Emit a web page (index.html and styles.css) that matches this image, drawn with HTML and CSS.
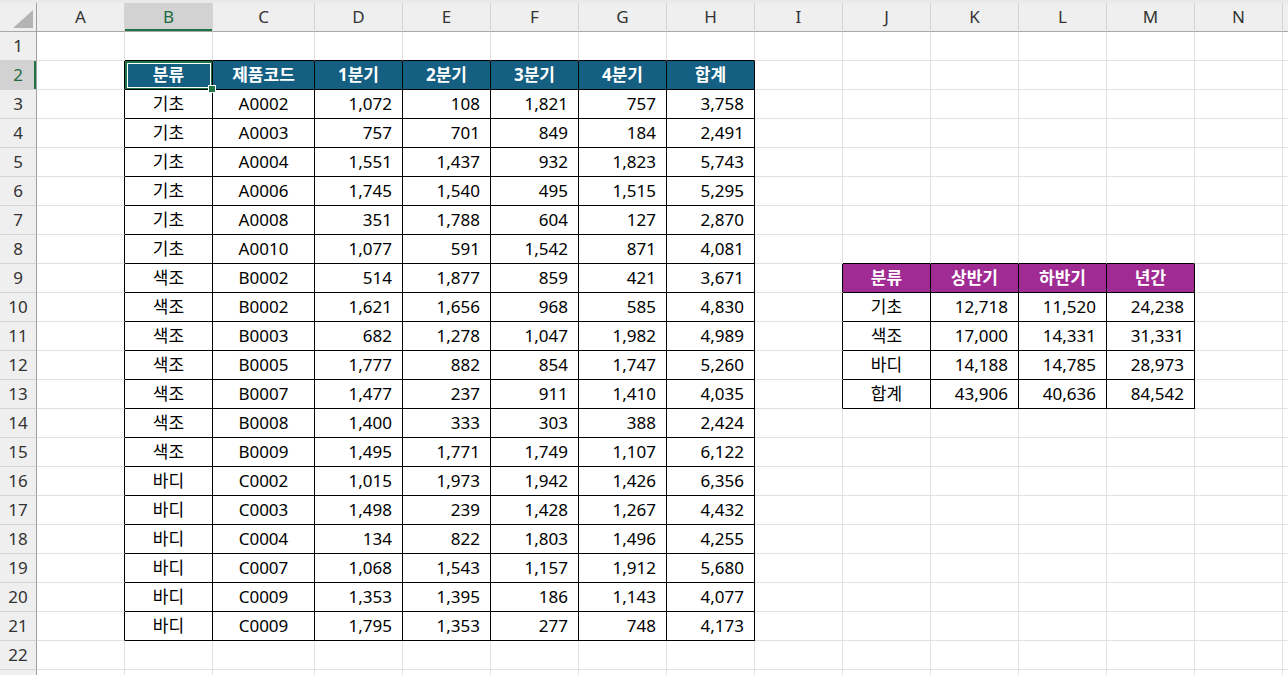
FILE: index.html
```html
<!DOCTYPE html>
<html lang="ko">
<head>
<meta charset="utf-8">
<title>Sheet</title>
<link rel="stylesheet" href="styles.css">
</head>
<body>
<div class="topstrip"></div>
<table class="sheet">
<colgroup>
<col class="w-rh"><col class="w88"><col class="w88"><col class="w102"><col class="w88"><col class="w88"><col class="w88"><col class="w88"><col class="w88"><col class="w88"><col class="w88"><col class="w88"><col class="w88"><col class="w88"><col class="w88"><col class="w88">
</colgroup>
<tr class="colhead">
<th class="corner"><span class="tri"></span></th><th class="ch">A</th><th class="ch selc">B</th><th class="ch">C</th><th class="ch">D</th><th class="ch">E</th><th class="ch">F</th><th class="ch">G</th><th class="ch">H</th><th class="ch">I</th><th class="ch">J</th><th class="ch">K</th><th class="ch">L</th><th class="ch">M</th><th class="ch">N</th><th class="ch"></th>
</tr>
<tr><th class="rh">1</th><td></td><td class="kb"></td><td class="kb"></td><td class="kb"></td><td class="kb"></td><td class="kb"></td><td class="kb"></td><td class="kb"></td><td></td><td></td><td></td><td></td><td></td><td></td><td></td></tr>
<tr><th class="rh selr">2</th><td class="kr"></td><td class="k hb sel">분류<span class="handle"></span></td><td class="k hb">제품코드</td><td class="k hb">1분기</td><td class="k hb">2분기</td><td class="k hb">3분기</td><td class="k hb">4분기</td><td class="k hb">합계</td><td></td><td></td><td></td><td></td><td></td><td></td><td></td></tr>
<tr><th class="rh">3</th><td class="kr"></td><td class="k">기초</td><td class="k">A0002</td><td class="k n">1,072</td><td class="k n">108</td><td class="k n">1,821</td><td class="k n">757</td><td class="k n">3,758</td><td></td><td></td><td></td><td></td><td></td><td></td><td></td></tr>
<tr><th class="rh">4</th><td class="kr"></td><td class="k">기초</td><td class="k">A0003</td><td class="k n">757</td><td class="k n">701</td><td class="k n">849</td><td class="k n">184</td><td class="k n">2,491</td><td></td><td></td><td></td><td></td><td></td><td></td><td></td></tr>
<tr><th class="rh">5</th><td class="kr"></td><td class="k">기초</td><td class="k">A0004</td><td class="k n">1,551</td><td class="k n">1,437</td><td class="k n">932</td><td class="k n">1,823</td><td class="k n">5,743</td><td></td><td></td><td></td><td></td><td></td><td></td><td></td></tr>
<tr><th class="rh">6</th><td class="kr"></td><td class="k">기초</td><td class="k">A0006</td><td class="k n">1,745</td><td class="k n">1,540</td><td class="k n">495</td><td class="k n">1,515</td><td class="k n">5,295</td><td></td><td></td><td></td><td></td><td></td><td></td><td></td></tr>
<tr><th class="rh">7</th><td class="kr"></td><td class="k">기초</td><td class="k">A0008</td><td class="k n">351</td><td class="k n">1,788</td><td class="k n">604</td><td class="k n">127</td><td class="k n">2,870</td><td></td><td></td><td></td><td></td><td></td><td></td><td></td></tr>
<tr><th class="rh">8</th><td class="kr"></td><td class="k">기초</td><td class="k">A0010</td><td class="k n">1,077</td><td class="k n">591</td><td class="k n">1,542</td><td class="k n">871</td><td class="k n">4,081</td><td></td><td class="kb"></td><td class="kb"></td><td class="kb"></td><td class="kb"></td><td></td><td></td></tr>
<tr><th class="rh">9</th><td class="kr"></td><td class="k">색조</td><td class="k">B0002</td><td class="k n">514</td><td class="k n">1,877</td><td class="k n">859</td><td class="k n">421</td><td class="k n">3,671</td><td class="kr"></td><td class="k hp">분류</td><td class="k hp">상반기</td><td class="k hp">하반기</td><td class="k hp">년간</td><td></td><td></td></tr>
<tr><th class="rh">10</th><td class="kr"></td><td class="k">색조</td><td class="k">B0002</td><td class="k n">1,621</td><td class="k n">1,656</td><td class="k n">968</td><td class="k n">585</td><td class="k n">4,830</td><td class="kr"></td><td class="k">기초</td><td class="k n">12,718</td><td class="k n">11,520</td><td class="k n">24,238</td><td></td><td></td></tr>
<tr><th class="rh">11</th><td class="kr"></td><td class="k">색조</td><td class="k">B0003</td><td class="k n">682</td><td class="k n">1,278</td><td class="k n">1,047</td><td class="k n">1,982</td><td class="k n">4,989</td><td class="kr"></td><td class="k">색조</td><td class="k n">17,000</td><td class="k n">14,331</td><td class="k n">31,331</td><td></td><td></td></tr>
<tr><th class="rh">12</th><td class="kr"></td><td class="k">색조</td><td class="k">B0005</td><td class="k n">1,777</td><td class="k n">882</td><td class="k n">854</td><td class="k n">1,747</td><td class="k n">5,260</td><td class="kr"></td><td class="k">바디</td><td class="k n">14,188</td><td class="k n">14,785</td><td class="k n">28,973</td><td></td><td></td></tr>
<tr><th class="rh">13</th><td class="kr"></td><td class="k">색조</td><td class="k">B0007</td><td class="k n">1,477</td><td class="k n">237</td><td class="k n">911</td><td class="k n">1,410</td><td class="k n">4,035</td><td class="kr"></td><td class="k">합계</td><td class="k n">43,906</td><td class="k n">40,636</td><td class="k n">84,542</td><td></td><td></td></tr>
<tr><th class="rh">14</th><td class="kr"></td><td class="k">색조</td><td class="k">B0008</td><td class="k n">1,400</td><td class="k n">333</td><td class="k n">303</td><td class="k n">388</td><td class="k n">2,424</td><td></td><td></td><td></td><td></td><td></td><td></td><td></td></tr>
<tr><th class="rh">15</th><td class="kr"></td><td class="k">색조</td><td class="k">B0009</td><td class="k n">1,495</td><td class="k n">1,771</td><td class="k n">1,749</td><td class="k n">1,107</td><td class="k n">6,122</td><td></td><td></td><td></td><td></td><td></td><td></td><td></td></tr>
<tr><th class="rh">16</th><td class="kr"></td><td class="k">바디</td><td class="k">C0002</td><td class="k n">1,015</td><td class="k n">1,973</td><td class="k n">1,942</td><td class="k n">1,426</td><td class="k n">6,356</td><td></td><td></td><td></td><td></td><td></td><td></td><td></td></tr>
<tr><th class="rh">17</th><td class="kr"></td><td class="k">바디</td><td class="k">C0003</td><td class="k n">1,498</td><td class="k n">239</td><td class="k n">1,428</td><td class="k n">1,267</td><td class="k n">4,432</td><td></td><td></td><td></td><td></td><td></td><td></td><td></td></tr>
<tr><th class="rh">18</th><td class="kr"></td><td class="k">바디</td><td class="k">C0004</td><td class="k n">134</td><td class="k n">822</td><td class="k n">1,803</td><td class="k n">1,496</td><td class="k n">4,255</td><td></td><td></td><td></td><td></td><td></td><td></td><td></td></tr>
<tr><th class="rh">19</th><td class="kr"></td><td class="k">바디</td><td class="k">C0007</td><td class="k n">1,068</td><td class="k n">1,543</td><td class="k n">1,157</td><td class="k n">1,912</td><td class="k n">5,680</td><td></td><td></td><td></td><td></td><td></td><td></td><td></td></tr>
<tr><th class="rh">20</th><td class="kr"></td><td class="k">바디</td><td class="k">C0009</td><td class="k n">1,353</td><td class="k n">1,395</td><td class="k n">186</td><td class="k n">1,143</td><td class="k n">4,077</td><td></td><td></td><td></td><td></td><td></td><td></td><td></td></tr>
<tr><th class="rh">21</th><td class="kr"></td><td class="k">바디</td><td class="k">C0009</td><td class="k n">1,795</td><td class="k n">1,353</td><td class="k n">277</td><td class="k n">748</td><td class="k n">4,173</td><td></td><td></td><td></td><td></td><td></td><td></td><td></td></tr>
<tr><th class="rh">22</th><td></td><td></td><td></td><td></td><td></td><td></td><td></td><td></td><td></td><td></td><td></td><td></td><td></td><td></td><td></td></tr>
<tr><th class="rh"></th><td></td><td></td><td></td><td></td><td></td><td></td><td></td><td></td><td></td><td></td><td></td><td></td><td></td><td></td><td></td></tr>
</table>
</body>
</html>
```
FILE: styles.css
```css
html, body {
  margin: 0;
  padding: 0;
  background: #ffffff;
  overflow: hidden;
}
body {
  width: 1288px;
  height: 675px;
  font-family: "Noto Sans", "Noto Sans CJK KR", sans-serif;
  font-size: 17px;
  color: #000;
}
.topstrip {
  height: 3px;
  background: #e7eae7;
}
.sheet {
  border-collapse: separate;
  border-spacing: 0;
  table-layout: fixed;
  width: 1371px;
}
.w-rh { width: 37px; }
.w88 { width: 88px; }
.w102 { width: 102px; }

.sheet tr { height: 29px; }

.sheet td, .sheet th {
  padding: 0;
  height: 29px;
  line-height: 28px;
  text-align: center;
  white-space: nowrap;
  overflow: hidden;
  font-weight: 400;
  border-right: 1px solid #e1e1e1;
  border-bottom: 1px solid #e1e1e1;
  box-sizing: border-box;
}

.corner {
  background: #efefef;
  position: relative;
  border-right: 1px solid #9e9e9e !important;
  border-bottom: 1px solid #a8a8a8 !important;
}
.tri {
  position: absolute;
  right: 3px;
  bottom: 3px;
  width: 0;
  height: 0;
  border-left: 20px solid transparent;
  border-bottom: 18px solid #b4b4b4;
}
.ch {
  background: #efefef;
  color: #333;
  border-right: 1px solid #d4d4d4 !important;
  border-bottom: 1px solid #a8a8a8 !important;
}
.ch.selc {
  background: #d2d2d2;
  color: #1d6b40;
  box-shadow: inset 0 -2px 0 #217346;
}
.rh {
  background: #efefef;
  color: #333;
  border-right: 1px solid #9e9e9e !important;
  border-bottom: 1px solid #d4d4d4 !important;
}
.rh.selr {
  background: #d2d2d2;
  color: #1d6b40;
  box-shadow: inset -2px 0 0 #217346;
}

.sheet td.k {
  border-right: 1px solid #000;
  border-bottom: 1px solid #000;
}
.sheet td.kr { border-right: 1px solid #000; }
.sheet td.kb { border-bottom: 1px solid #000; }

.sheet td.n {
  text-align: right;
  padding-right: 10px;
}
.sheet td.hb {
  background: #156082;
  color: #fff;
  font-weight: 700;
}
.sheet td.hp {
  background: #a02b93;
  color: #fff;
  font-weight: 700;
}

.sheet td.sel {
  position: relative;
  overflow: visible;
  box-shadow: inset 2px 2px 0 #217346, inset -1px -1px 0 #217346, inset 3px 3px 0 #fff, inset -2px -2px 0 #fff;
}
.handle {
  position: absolute;
  right: -4px;
  bottom: -4px;
  width: 6px;
  height: 6px;
  background: #217346;
  border: 1px solid #fff;
  z-index: 2;
}
```
